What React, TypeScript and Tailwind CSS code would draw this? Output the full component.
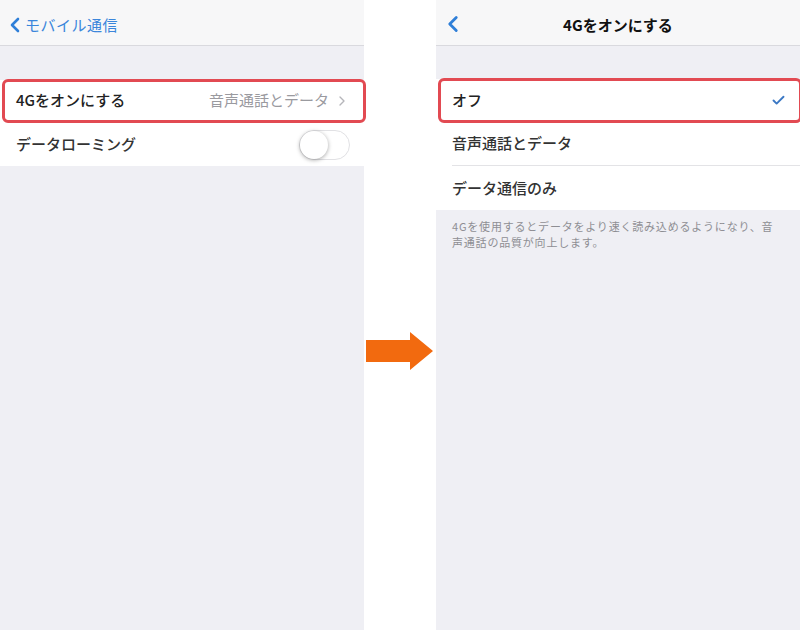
import { Check, ChevronLeft, ChevronRight } from "lucide-react";

const FONT = { fontFamily: "'Noto Sans CJK JP', 'Noto Sans', sans-serif" };

function Highlight() {
  return (
    <div className="pointer-events-none absolute -left-[14px] -right-[2px] -top-[1px] -bottom-[2px] rounded-md border-[3px] border-[#e24a52]" />
  );
}

function LeftPanel() {
  return (
    <div className="flex h-full w-[364px] flex-col bg-[#efeff4]">
      <div className="flex h-[46px] items-center border-b border-[#d9d9de] bg-[#f7f7f8] pl-[3px] pt-[5px]">
        <ChevronLeft className="h-[24px] w-[24px] text-[#2f7fd8]" strokeWidth={2.6} />
        <span className="-ml-[2px] text-[15px] tracking-[0.5px] text-[#3b86db]">モバイル通信</span>
      </div>
      <div className="mt-[34px] bg-white">
        <div className="relative ml-[16px] flex h-[41px] items-center pr-[14px]">
          <span className="text-[15px] font-medium text-[#222]">4Gをオンにする</span>
          <span className="ml-auto text-[15px] text-[#9a9a9f]">音声通話とデータ</span>
          <ChevronRight className="ml-[5px] h-[16px] w-[16px] text-[#b5b5ba]" strokeWidth={2} />
          <Highlight />
        </div>
        <div className="ml-[16px] flex h-[45px] items-center pr-[14px] pt-[2px]">
          <span className="text-[15px] font-medium text-[#333]">データローミング</span>
          <div className="ml-auto flex h-[30px] w-[51px] items-center rounded-full border border-[#e1e1e4] bg-white">
            <div className="h-[28px] w-[28px] rounded-full bg-white shadow-[0_1px_4px_rgba(0,0,0,0.35)]" />
          </div>
        </div>
      </div>
    </div>
  );
}

function Arrow() {
  return (
    <div className="flex h-full w-[72px] items-center justify-center bg-white pt-[72px]">
      <svg width="70" height="40" viewBox="0 0 70 40">
        <polygon points="1,9 45,9 45,1 68,20 45,39 45,31 1,31" fill="#f26a0f" />
      </svg>
    </div>
  );
}

function RightPanel() {
  const rows = ["音声通話とデータ", "データ通信のみ"];
  return (
    <div className="flex h-full w-[364px] flex-col bg-[#efeff4]">
      <div className="relative flex h-[46px] items-center justify-center border-b border-[#d9d9de] bg-[#f7f7f8] pt-[5px]">
        <ChevronLeft className="absolute left-[4px] top-[11px] h-[26px] w-[26px] text-[#2f7fd8]" strokeWidth={2.6} />
        <span className="text-[15px] font-bold text-[#111]">4Gをオンにする</span>
      </div>
      <div className="mt-[33px] bg-white">
        <div className="relative ml-[16px] flex h-[43px] items-center border-b border-[#e3e3e6] pr-[14px]">
          <span className="text-[15px] font-medium text-[#222]">オフ</span>
          <Check className="ml-auto h-[15px] w-[15px] text-[#3b78c4]" strokeWidth={3} />
          <Highlight />
        </div>
        {rows.map((r, i) => (
          <div
            key={r}
            className={`ml-[16px] flex h-[44px] items-center pr-[14px] ${i === 0 ? "border-b border-[#e3e3e6]" : ""}`}
          >
            <span className="text-[15px] font-medium text-[#333]">{r}</span>
          </div>
        ))}
      </div>
      <p className="pl-[16px] pr-[23px] pt-[8px] text-[11px] leading-[16px] tracking-[0.8px] text-[#8e8e93]">
        4Gを使用するとデータをより速く読み込めるようになり、音声通話の品質が向上します。
      </p>
    </div>
  );
}

export default function App() {
  return (
    <div className="flex h-[630px] w-[800px] bg-white" style={FONT}>
      <LeftPanel />
      <Arrow />
      <RightPanel />
    </div>
  );
}
